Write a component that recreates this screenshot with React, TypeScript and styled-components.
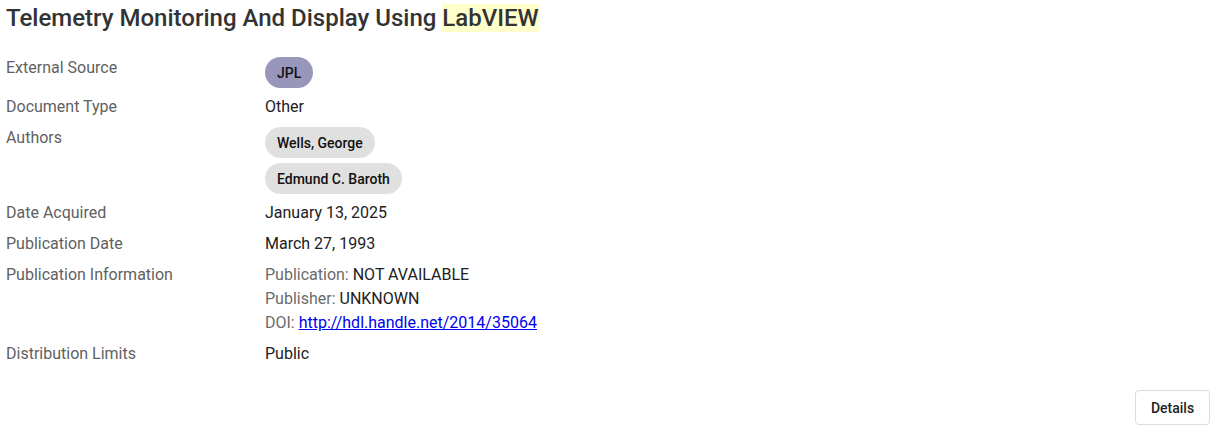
import styled, { createGlobalStyle } from 'styled-components';

const GlobalStyle = createGlobalStyle`
  body {
    margin: 0;
    background: #fff;
    font-family: Roboto, "Liberation Sans", Arial, sans-serif;
    color: #212121;
  }
`;

type Row = {
  label: string;
  kind: 'text' | 'chips' | 'lines';
  value?: string;
  chips?: string[];
  accent?: boolean;
};

const rows: Row[] = [
  { label: 'External Source', kind: 'chips', chips: ['JPL'], accent: true },
  { label: 'Document Type', kind: 'text', value: 'Other' },
  { label: 'Authors', kind: 'chips', chips: ['Wells, George', 'Edmund C. Baroth'] },
  { label: 'Date Acquired', kind: 'text', value: 'January 13, 2025' },
  { label: 'Publication Date', kind: 'text', value: 'March 27, 1993' },
  { label: 'Publication Information', kind: 'lines' },
  { label: 'Distribution Limits', kind: 'text', value: 'Public' },
];

export default function App() {
  return (
    <>
      <GlobalStyle />
      <Page>
        <Title>
          Telemetry Monitoring And Display Using <Mark>LabVIEW</Mark>
        </Title>
        <Meta>
          {rows.map((r) => (
            <MetaRow key={r.label}>
              <Label>{r.label}</Label>
              {r.kind === 'text' && <Value>{r.value}</Value>}
              {r.kind === 'chips' && (
                <Chips>
                  {r.chips!.map((c) => (
                    <Chip key={c} accent={r.accent}>
                      {c}
                    </Chip>
                  ))}
                </Chips>
              )}
              {r.kind === 'lines' && (
                <Value>
                  <Line>
                    <Prefix>Publication: </Prefix>NOT AVAILABLE
                  </Line>
                  <Line>
                    <Prefix>Publisher: </Prefix>UNKNOWN
                  </Line>
                  <Line>
                    <Prefix>DOI: </Prefix>
                    <Link href="#">http://hdl.handle.net/2014/35064</Link>
                  </Line>
                </Value>
              )}
            </MetaRow>
          ))}
        </Meta>
        <Footer>
          <DetailsButton>Details</DetailsButton>
        </Footer>
      </Page>
    </>
  );
}

const Page = styled.div`
  padding: 4px 7px 0 6px;
`;

const Title = styled.h1`
  margin: 0;
  font-size: 24px;
  line-height: 28px;
  font-weight: 500;
  color: #333;
`;

const Mark = styled.span`
  background: #ffffcc;
`;

const Meta = styled.div`
  margin-top: 24px;
  display: flex;
  flex-direction: column;
  gap: 7px;
`;

const MetaRow = styled.div`
  display: grid;
  grid-template-columns: 259px 1fr;
  align-items: start;
`;

const Label = styled.div`
  font-size: 16px;
  line-height: 24px;
  color: #5f5f5f;
`;

const Value = styled.div`
  font-size: 16px;
  line-height: 24px;
  color: #212121;
`;

const Line = styled.div``;

const Prefix = styled.span`
  color: #6b6b6b;
`;

const Link = styled.a`
  color: #0000ee;
  text-decoration: underline;
`;

const Chips = styled.div`
  display: flex;
  flex-direction: column;
  align-items: flex-start;
  gap: 5px;
  margin-top: 1px;
`;

const Chip = styled.span<{ accent?: boolean }>`
  display: inline-flex;
  align-items: center;
  height: 31px;
  padding: 0 12px;
  border-radius: 16px;
  font-size: 14px;
  font-weight: 500;
  color: #111;
  background: ${(p) => (p.accent ? '#9896bb' : '#e0e0e0')};
`;

const Footer = styled.div`
  display: flex;
  justify-content: flex-end;
  margin-top: 24px;
`;

const DetailsButton = styled.button`
  height: 35px;
  width: 75px;
  background: #fff;
  border: 1px solid #dcdcdc;
  border-radius: 4px;
  font-family: Roboto, "Liberation Sans", Arial, sans-serif;
  font-size: 14px;
  font-weight: 500;
  color: #222;
  cursor: pointer;
`;
